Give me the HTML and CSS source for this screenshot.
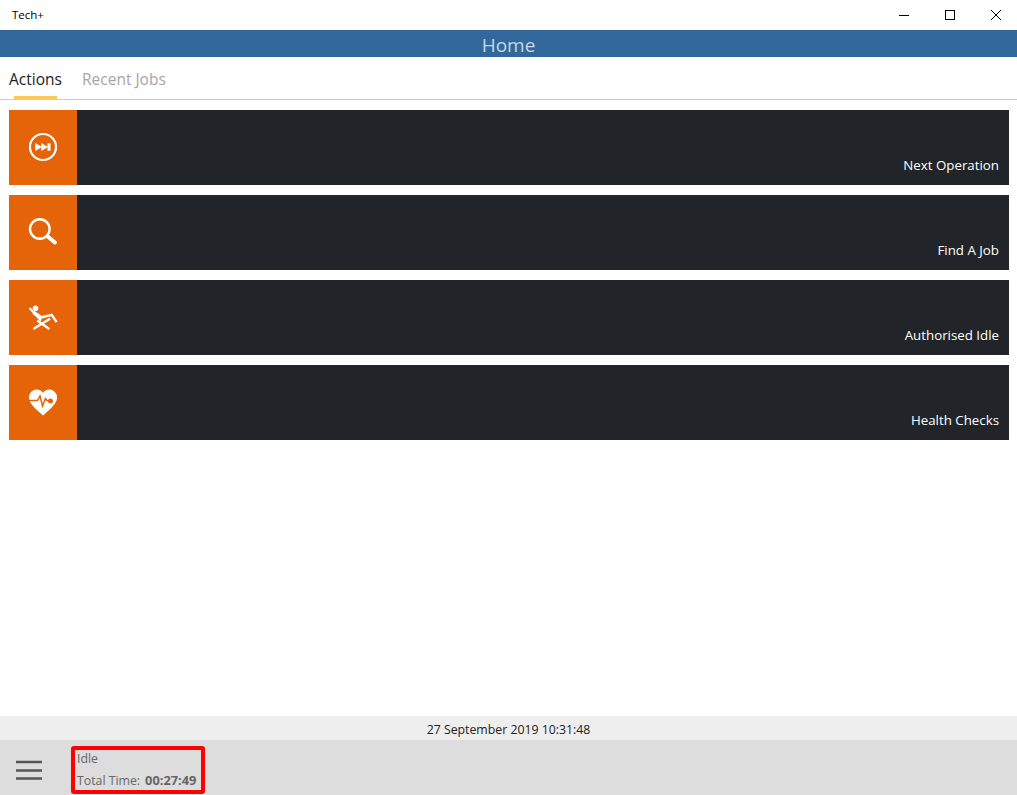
FILE: index.html
```html
<!DOCTYPE html>
<html lang="en">
<head>
<meta charset="utf-8">
<title>Tech+</title>
<link rel="stylesheet" href="styles.css">
</head>
<body>
<div class="app">
  <div class="titlebar">
    <span class="app-name">Tech+</span>
    <div class="win-controls">
      <span class="win-btn"><svg width="12" height="12" viewBox="0 0 12 12"><path d="M1 6.500h10" stroke="#000" fill="none"/></svg></span>
      <span class="win-btn"><svg width="12" height="12" viewBox="0 0 12 12"><rect x="1.500" y="1.500" width="9" height="9" stroke="#000" fill="none"/></svg></span>
      <span class="win-btn"><svg width="12" height="12" viewBox="0 0 12 12"><path d="M1 1l10 10M11 1L1 11" stroke="#000" fill="none"/></svg></span>
    </div>
  </div>
  <header class="page-header">Home</header>
  <nav class="tabs">
    <a class="tab tab-active">Actions</a>
    <a class="tab">Recent Jobs</a>
  </nav>
  <main class="actions">
    <div class="action">
      <div class="tile">
        <svg width="30" height="30" viewBox="0 0 30 30"><circle cx="15" cy="15" r="13" fill="none" stroke="#fff" stroke-width="2.200"/><path d="M7.500 11.500l6 3.500-6 3.500zM13.500 11.500l6 3.500-6 3.500z" fill="#fff" stroke="#fff" stroke-width=".6"/><rect x="19.500" y="11.300" width="3" height="7.400" fill="#fff"/></svg>
      </div>
      <div class="action-body"><span class="action-label">Next Operation</span></div>
    </div>
    <div class="action">
      <div class="tile">
        <svg width="30" height="30" viewBox="0 0 30 30"><circle cx="11.800" cy="12" r="9.800" fill="none" stroke="#fff" stroke-width="2.400"/><path d="M20 19.800l7 5.700" stroke="#fff" stroke-width="3.800" stroke-linecap="round" fill="none"/></svg>
      </div>
      <div class="action-body"><span class="action-label">Find A Job</span></div>
    </div>
    <div class="action">
      <div class="tile">
        <svg width="30" height="30" viewBox="0 0 30 30"><circle cx="7.500" cy="6.300" r="2.800" fill="#fff"/><path d="M1.500 6L13 18.500" stroke="#fff" stroke-width="2" fill="none"/><path d="M5.500 10.500l8 5.500" stroke="#fff" stroke-width="3.800" fill="none"/><path d="M13 15.500l10.700-2.700 5 7.400" stroke="#fff" stroke-width="2.400" fill="none"/><path d="M5.300 27L22 16.800M9.300 18.500l12 8.500" stroke="#fff" stroke-width="2.200" fill="none"/></svg>
      </div>
      <div class="action-body"><span class="action-label">Authorised Idle</span></div>
    </div>
    <div class="action">
      <div class="tile">
        <svg width="30" height="30" viewBox="0 0 30 30"><path d="M15 28.500C10 24 5.500 20 3 16.500 .8 13 .5 10 1.300 8 3 4 6 2.500 9 2.500c2.500 0 4.800 1.200 6 3.500 1.200-2.300 3.500-3.500 6-3.500 3 0 6 1.500 7.700 5.500.8 2 .5 5-1.700 8.500C24.500 20 20 24 15 28.500z" fill="#fff"/><path d="M1 13.500h8.500l2.500-4.500 2.500 10 3-7.500 1.500 2h3" stroke="#e66409" stroke-width="1.500" fill="none"/><circle cx="22.500" cy="14" r="2.500" fill="#e66409"/></svg>
      </div>
      <div class="action-body"><span class="action-label">Health Checks</span></div>
    </div>
  </main>
  <div class="datebar">27 September 2019 10:31:48</div>
  <footer class="bottombar">
    <div class="menu-icon"><svg width="26" height="20" viewBox="0 0 26 20"><path d="M0 2h26M0 10.500h26M0 18.500h26" stroke="#555" stroke-width="2.400" fill="none"/></svg></div>
    <div class="status">
      <div class="status-line">Idle</div>
      <div class="status-line">Total Time:<b class="status-time">00:27:49</b></div>
    </div>
  </footer>
</div>
</body>
</html>
```
FILE: styles.css
```css
* { box-sizing: border-box; }
html, body { margin: 0; padding: 0; height: 100%; }
body { font-family: "Open Sans", "Noto Sans", "Liberation Sans", sans-serif; background: #fff; }
.app { display: flex; flex-direction: column; height: 795px; overflow: hidden; }
.titlebar { height: 30px; flex: none; display: flex; justify-content: space-between; align-items: center; background: #fff; }
.app-name { font-size: 11.500px; color: #000; margin-left: 12px; margin-top: -2px; }
.win-controls { display: flex; margin-right: -2px; }
.win-btn { width: 46px; height: 30px; display: flex; align-items: center; justify-content: center; }
.page-header { height: 27px; flex: none; background: #32679b; color: #c5d6e6; font-size: 19px; line-height: 30px; text-align: center; }
.tabs { height: 43px; flex: none; display: flex; gap: 17px; padding: 0 0 0 5px; border-bottom: 1px solid #ccc; }
.tab { height: 42px; padding: 0 4px; font-size: 15.500px; line-height: 45px; color: #a6a6a6; position: relative; }
.tab-active { color: #222; width: 56px; }
.tab-active::after { content: ""; position: absolute; left: 9px; bottom: 0; width: 43px; height: 3px; background: #fcc858; }
.actions { flex: 1; display: flex; flex-direction: column; gap: 10px; padding: 10px 8px 0 9px; }
.action { height: 75px; display: flex; background: #212529; }
.tile { width: 68px; flex: none; background: #e66409; display: flex; align-items: center; justify-content: center; padding-bottom: 2px; }
.action-body { flex: 1; display: flex; align-items: flex-end; justify-content: flex-end; padding: 0 10px 10px 0; }
.action-label { font-size: 13.300px; line-height: 20px; color: #fff; }
.datebar { height: 24px; flex: none; background: #eee; color: #222; font-size: 12.300px; line-height: 27px; text-align: center; }
.bottombar { height: 55px; flex: none; background: #ddd; display: flex; }
.menu-icon { width: 71px; flex: none; display: flex; align-items: center; padding: 5px 0 0 16px; }
.status { width: 134px; height: 48px; margin-top: 6px; border: 4px solid #f00; border-radius: 3px; padding: 0 0 0 2px; color: #666; font-size: 12.300px; }
.status-line { height: 20px; line-height: 18px; }
.status-line + .status-line { height: 20px; line-height: 20px; }
.status-time { margin-left: 5px; font-size: 12.800px; font-weight: 700; }
```
